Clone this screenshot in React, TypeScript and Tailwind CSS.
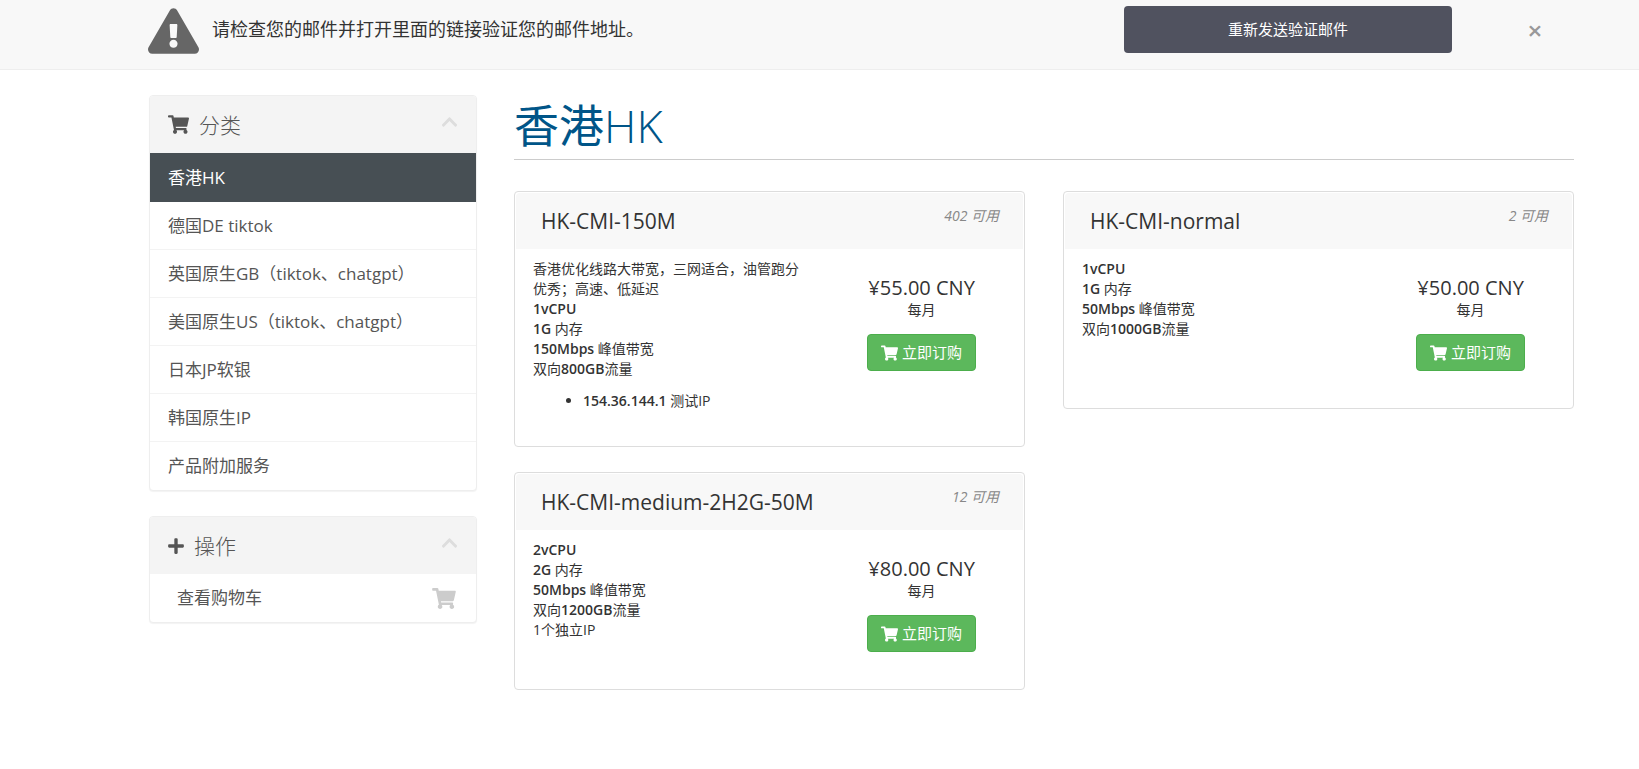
import type { ReactNode } from "react";
import {
  FaChevronUp,
  FaExclamationTriangle,
  FaPlus,
  FaShoppingCart,
} from "react-icons/fa";

type Product = {
  id: string;
  name: string;
  stock: number;
  price: string;
  description: ReactNode;
};

const categories = [
  "香港HK",
  "德国DE tiktok",
  "英国原生GB（tiktok、chatgpt）",
  "美国原生US（tiktok、chatgpt）",
  "日本JP软银",
  "韩国原生IP",
  "产品附加服务",
];

const products: Product[] = [
  {
    id: "hk-cmi-150m",
    name: "HK-CMI-150M",
    stock: 402,
    price: "¥55.00 CNY",
    description: (
      <>
        <p>香港优化线路大带宽，三网适合，油管跑分优秀；高速、低延迟</p>
        <p><strong className="font-semibold">1vCPU</strong></p>
        <p><strong className="font-semibold">1G</strong> 内存</p>
        <p><strong className="font-semibold">150Mbps</strong> 峰值带宽</p>
        <p>双向<strong className="font-semibold">800GB</strong>流量</p>
        <ul className="mt-3 list-disc pl-[50px]">
          <li><strong className="font-semibold">154.36.144.1</strong> 测试IP</li>
        </ul>
      </>
    ),
  },
  {
    id: "hk-cmi-normal",
    name: "HK-CMI-normal",
    stock: 2,
    price: "¥50.00 CNY",
    description: (
      <>
        <p><strong className="font-semibold">1vCPU</strong></p>
        <p><strong className="font-semibold">1G</strong> 内存</p>
        <p><strong className="font-semibold">50Mbps</strong> 峰值带宽</p>
        <p>双向<strong className="font-semibold">1000GB</strong>流量</p>
      </>
    ),
  },
  {
    id: "hk-cmi-medium",
    name: "HK-CMI-medium-2H2G-50M",
    stock: 12,
    price: "¥80.00 CNY",
    description: (
      <>
        <p><strong className="font-semibold">2vCPU</strong></p>
        <p><strong className="font-semibold">2G</strong> 内存</p>
        <p><strong className="font-semibold">50Mbps</strong> 峰值带宽</p>
        <p>双向<strong className="font-semibold">1200GB</strong>流量</p>
        <p>1个独立IP</p>
      </>
    ),
  },
];

function VerifyBanner() {
  return (
    <div className="border-b border-[#eeeeee] bg-[#f8f8f8]">
      <div className="ml-[148px] mr-[95px] flex h-[69px] items-start pt-[6px]">
        <FaExclamationTriangle className="mt-[2px] h-[46px] w-[51px] shrink-0 text-[#666666]" />
        <p className="ml-[13px] mt-[11px] flex-1 text-[18px] leading-6">请检查您的邮件并打开里面的链接验证您的邮件地址。</p>
        <button className="h-[47px] w-[328px] rounded-[4px] bg-[#50525f] text-[15px] text-white hover:bg-[#40424c]">
          重新发送验证邮件
        </button>
        <button aria-label="关闭" className="ml-[74px] mt-3 w-[18px] text-[26px] font-semibold leading-6 text-[#999999] hover:text-black">
          ×
        </button>
      </div>
    </div>
  );
}

function SidebarPanel({ icon, title, children }: { icon: ReactNode; title: string; children: ReactNode }) {
  return (
    <section className="overflow-hidden rounded-[4px] border border-[#eeeeee] bg-white shadow-[0_1px_1px_rgba(0,0,0,0.05)]">
      <header className="flex h-[57px] items-center bg-[#f4f4f4] px-[18px] text-[#555555]">
        {icon}
        <h3 className="ml-[10px] flex-1 text-[21px] font-light leading-6">{title}</h3>
        <button aria-label="收起" className="mb-[6px] text-[#dddddd]">
          <FaChevronUp className="h-[18px] w-[17px]" />
        </button>
      </header>
      {children}
    </section>
  );
}

function ProductCard({ product }: { product: Product }) {
  return (
    <article className="min-h-[218px] rounded-[4px] border border-[#dddddd] bg-white p-px">
      <header className="flex h-[56px] justify-between rounded-t-[4px] bg-[#f8f8f8] pl-[25px] pr-6">
        <h2 className="pt-[14px] text-[21px] leading-7">{product.name}</h2>
        <span className="pt-[13px] text-[14px] italic leading-5 text-[#888888]">{product.stock} 可用</span>
      </header>
      <div className="flex items-start">
        <div className="w-3/5 px-[17px] pb-[34px] pt-[10px] text-[14px] leading-5">{product.description}</div>
        <div className="flex w-2/5 flex-col items-center pt-[27px]">
          <span className="text-[20px] leading-6">{product.price}</span>
          <span className="text-[14px] leading-5">每月</span>
          <button className="mt-[14px] flex h-[37px] items-center gap-1 rounded-[4px] border border-[#4cae4c] bg-[#5cb85c] px-[13px] text-[15px] text-white hover:bg-[#449d44]">
            <FaShoppingCart className="h-4 w-[17px]" />
            立即订购
          </button>
        </div>
      </div>
    </article>
  );
}

export default function App() {
  return (
    <div className="min-h-screen bg-white font-['Open_Sans','Noto_Sans_CJK_SC',sans-serif] text-[#333333]">
      <VerifyBanner />

      <div className="ml-[149px] mr-[65px] flex items-start gap-[37px] pt-[25px]">
        <aside className="w-[328px] shrink-0 space-y-[25px]">
          <SidebarPanel icon={<FaShoppingCart className="h-[19px] w-[21px]" />} title="分类">
            <nav>
              {categories.map((item, i) => (
                <a
                  key={item}
                  href="#"
                  className={`flex items-center px-[18px] text-[17px] ${
                    i === 0
                      ? "h-[49px] bg-[#474f54] text-white"
                      : "h-12 border-b border-[#f3f3f3] text-[#555555] last:border-b-0 hover:bg-[#f5f5f5]"
                  }`}
                >
                  {item}
                </a>
              ))}
            </nav>
          </SidebarPanel>

          <SidebarPanel icon={<FaPlus className="h-[18px] w-4" />} title="操作">
            <a href="#" className="flex h-12 items-center justify-between pl-[27px] pr-5 text-[17px] text-[#555555]">
              查看购物车
              <FaShoppingCart className="h-[21px] w-6 text-[#cccccc]" />
            </a>
          </SidebarPanel>
        </aside>

        <main className="min-w-0 flex-1">
          <h1 className="mb-[31px] border-b border-[#cccccc] pb-[3px] text-[45px] leading-[61px] text-[#005588]">
            香港<span className="font-light">HK</span>
          </h1>
          <div className="grid grid-cols-2 items-start gap-x-[38px] gap-y-[25px]">
            {products.map((product) => (
              <ProductCard key={product.id} product={product} />
            ))}
          </div>
        </main>
      </div>
    </div>
  );
}
